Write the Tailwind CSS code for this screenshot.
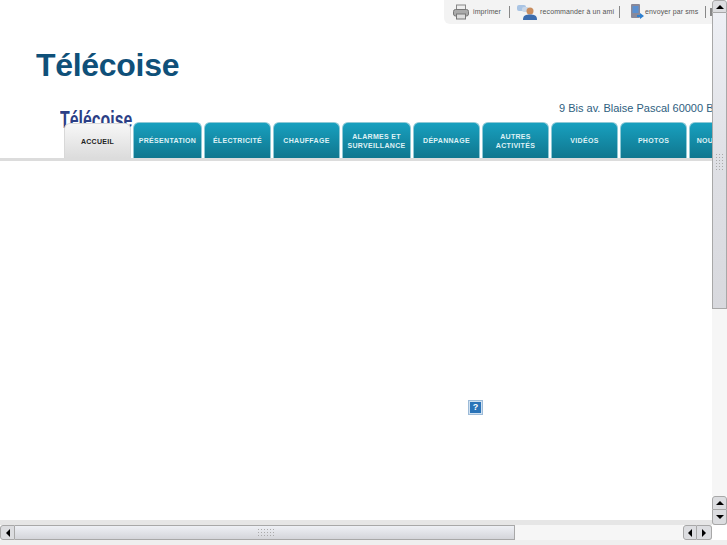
<!DOCTYPE html>
<html lang="fr">
<head>
<meta charset="UTF-8">
<title>Télécoise</title>
<script src="https://cdn.jsdelivr.net/npm/@tailwindcss/browser@4"></script>
</head>
<body class="bg-white font-['Liberation_Sans',sans-serif] overflow-hidden">
<div class="w-[727px] h-[545px] flex flex-col overflow-hidden">
  <div class="flex h-[525px]">
    <!-- page -->
    <div class="w-[712px] flex flex-col overflow-hidden">
      <div class="h-[24px] flex justify-end">
        <div class="w-[268px] bg-[#f3f3f3] rounded-bl-md flex items-center pl-[8px] text-[7px] tracking-[0.1px] text-[#555] whitespace-nowrap">
          <svg width="18" height="16" viewBox="0 0 18 16" class="shrink-0"><rect x="4.500" y="1" width="9" height="5" fill="#eee" stroke="#888"/><rect x="1.500" y="5.500" width="15" height="6.500" rx="2" fill="#aaa" stroke="#777"/><rect x="4.500" y="10" width="9" height="5" fill="#ddd" stroke="#777"/></svg>
          <span class="ml-[3px] w-[29px]">imprimer</span>
          <span class="w-px h-[12px] bg-[#888] ml-[8px]"></span>
          <svg width="20" height="16" viewBox="0 0 20 16" class="shrink-0 ml-[7px]"><rect x="0" y="1" width="9" height="6" rx="2" fill="#a9c4e4"/><rect x="5" y="3" width="7" height="5" rx="2" fill="#c9d7e8"/><circle cx="13" cy="7" r="3.500" fill="#c98d5e"/><path d="M6 16c0-5 3-5.500 7-5.500s7 .5 7 5.500z" fill="#3b6cae"/></svg>
          <span class="ml-[3px] w-[72px]">recommander à un ami</span>
          <span class="w-px h-[12px] bg-[#888] ml-[7px]"></span>
          <svg width="14" height="16" viewBox="0 0 14 16" class="shrink-0 ml-[10px]"><rect x="1" y="0" width="9" height="14" rx="1" fill="#889"/><rect x="2.500" y="2" width="6" height="7" fill="#5a8fd0"/><path d="M7 11h3V9l4 3-4 3v-2H7z" fill="#2d7fd0"/></svg>
          <span class="ml-[1px] w-[53px]">envoyer par sms</span>
          <span class="w-px h-[12px] bg-[#888] ml-[7px]"></span>
          <span class="w-[2px] h-[8px] bg-[#888] ml-[4px]"></span>
        </div>
      </div>
      <h1 class="mt-[24px] ml-[36px] text-[32px] tracking-[-0.3px] leading-[34px] font-bold text-[#0f5079]">Télécoise</h1>
      <div class="relative h-[78px] mt-[1px] overflow-hidden">
        <p class="absolute left-[559px] top-[18px] text-[11px] leading-[14px] text-[#2e5e80] whitespace-nowrap">9 Bis av. Blaise Pascal 60000 Beauvais</p>
        <p class="absolute left-[60px] top-[25px] text-[23px] leading-[24px] font-bold text-[#2c3f86] scale-x-[0.69] origin-left whitespace-nowrap">Télécoise</p>
        <div class="absolute left-[64px] right-0 bottom-[3px] flex items-end gap-[2px] font-bold text-[7px] leading-[9px] tracking-[0.3px] text-center whitespace-nowrap">
          <div class="w-[67px] h-[35px] shrink-0 flex items-center justify-center rounded-t-[6px] bg-gradient-to-b from-[#f7f7f7] to-[#dcdcdc] border-x border-t border-[#d8d8d8] text-[#222]">ACCUEIL</div>
          <div class="w-[69px] h-[36px] shrink-0 flex items-center justify-center rounded-t-[6px] bg-gradient-to-b from-[#18a0bf] to-[#10778f] border-x border-t border-[#8fc9d6] text-[#dff1f5]">PRÉSENTATION</div>
          <div class="w-[67px] h-[36px] shrink-0 flex items-center justify-center rounded-t-[6px] bg-gradient-to-b from-[#18a0bf] to-[#10778f] border-x border-t border-[#8fc9d6] text-[#dff1f5]">ÉLECTRICITÉ</div>
          <div class="w-[67px] h-[36px] shrink-0 flex items-center justify-center rounded-t-[6px] bg-gradient-to-b from-[#18a0bf] to-[#10778f] border-x border-t border-[#8fc9d6] text-[#dff1f5]">CHAUFFAGE</div>
          <div class="w-[69px] h-[36px] shrink-0 flex items-center justify-center rounded-t-[6px] bg-gradient-to-b from-[#18a0bf] to-[#10778f] border-x border-t border-[#8fc9d6] text-[#dff1f5]">ALARMES ET<br>SURVEILLANCE</div>
          <div class="w-[67px] h-[36px] shrink-0 flex items-center justify-center rounded-t-[6px] bg-gradient-to-b from-[#18a0bf] to-[#10778f] border-x border-t border-[#8fc9d6] text-[#dff1f5]">DÉPANNAGE</div>
          <div class="w-[67px] h-[36px] shrink-0 flex items-center justify-center rounded-t-[6px] bg-gradient-to-b from-[#18a0bf] to-[#10778f] border-x border-t border-[#8fc9d6] text-[#dff1f5]">AUTRES<br>ACTIVITÉS</div>
          <div class="w-[67px] h-[36px] shrink-0 flex items-center justify-center rounded-t-[6px] bg-gradient-to-b from-[#18a0bf] to-[#10778f] border-x border-t border-[#8fc9d6] text-[#dff1f5]">VIDÉOS</div>
          <div class="w-[67px] h-[36px] shrink-0 flex items-center justify-center rounded-t-[6px] bg-gradient-to-b from-[#18a0bf] to-[#10778f] border-x border-t border-[#8fc9d6] text-[#dff1f5]">PHOTOS</div>
          <div class="w-[67px] h-[36px] shrink-0 flex items-center justify-center rounded-t-[6px] bg-gradient-to-b from-[#18a0bf] to-[#10778f] border-x border-t border-[#8fc9d6] text-[#dff1f5]">NOUVEAUTÉS</div>
        </div>
        <div class="absolute left-0 right-0 bottom-0 h-[3px] bg-[#dcdcdc]"></div>
      </div>
      <div class="relative flex-1">
        <div class="absolute left-[468px] top-[239px] w-[15px] h-[15px] bg-[#cfe0f0] border border-[#9dbbd8] flex items-center justify-center">
          <div class="w-[11px] h-[11px] bg-[#2a73b8] text-white text-[9px] leading-[11px] font-bold text-center">?</div>
        </div>
      </div>
      <div class="h-[5px] bg-[#e6e6e6]"></div>
    </div>
    <!-- vertical scrollbar -->
    <div class="w-[15px] flex flex-col">
      <div class="h-[13px] bg-[#dcdde0] border border-[#a8a8a8] rounded-t-[3px] flex items-center justify-center">
        <div class="w-0 h-0 border-x-[4px] border-x-transparent border-b-[4px] border-b-black"></div>
      </div>
      <div class="h-[296px] bg-gradient-to-b from-[#eef0f5] via-[#dfe0e5] to-[#d8d9de] border-x border-b border-[#a8a8a8] pt-[140px]">
        <div class="mx-auto w-[9px] h-[17px] bg-[radial-gradient(#aaa_1px,transparent_1px)] bg-[length:3px_3px]"></div>
      </div>
      <div class="flex-1 bg-[#f6f6f6]"></div>
      <div class="h-[14px] bg-[#dcdde0] border border-[#a8a8a8] rounded-t-[3px] flex items-center justify-center">
        <div class="w-0 h-0 border-x-[4px] border-x-transparent border-b-[4px] border-b-black"></div>
      </div>
      <div class="h-[15px] bg-[#dcdde0] border border-t-0 border-[#a8a8a8] rounded-b-[3px] flex items-center justify-center">
        <div class="w-0 h-0 border-x-[4px] border-x-transparent border-t-[4px] border-t-black"></div>
      </div>
    </div>
  </div>
  <!-- horizontal scrollbar -->
  <div class="flex h-[15px] w-[712px]">
    <div class="w-[15px] bg-[#dcdde0] border border-[#a8a8a8] rounded-l-[3px] flex items-center justify-center">
      <div class="w-0 h-0 border-y-[4px] border-y-transparent border-r-[4px] border-r-black"></div>
    </div>
    <div class="w-[500px] bg-gradient-to-b from-[#eef0f5] to-[#d4d5da] border-y border-r border-[#a8a8a8] flex items-center pl-[242px]">
      <div class="w-[17px] h-[9px] bg-[radial-gradient(#aaa_1px,transparent_1px)] bg-[length:3px_3px]"></div>
    </div>
    <div class="flex-1 bg-[#f6f6f6]"></div>
    <div class="w-[14px] bg-[#dcdde0] border border-[#a8a8a8] rounded-l-[3px] flex items-center justify-center">
      <div class="w-0 h-0 border-y-[4px] border-y-transparent border-r-[4px] border-r-black"></div>
    </div>
    <div class="w-[15px] bg-[#dcdde0] border border-l-0 border-[#a8a8a8] rounded-r-[3px] flex items-center justify-center">
      <div class="w-0 h-0 border-y-[4px] border-y-transparent border-l-[4px] border-l-black"></div>
    </div>
  </div>
  <div class="flex-1 bg-[#efefef]"></div>
</div>
</body>
</html>
